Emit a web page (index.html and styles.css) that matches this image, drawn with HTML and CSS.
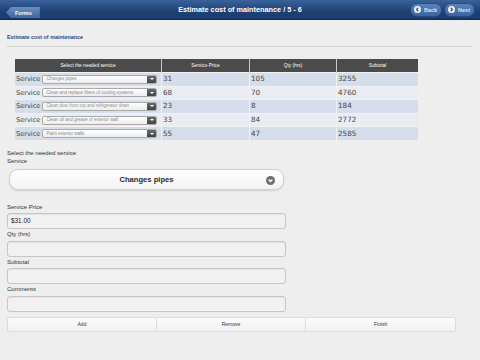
FILE: index.html
```html
<!DOCTYPE html>
<html lang="en">

<head>
  <meta charset="UTF-8" />
  <meta name="viewport" content="width=device-width, initial-scale=1.0" />
  <title>Estimate cost of maintenance</title>
  <link rel="stylesheet" href="styles.css">
</head>

<body>
  <header class="topbar">
    <div class="topbar-left">
      <a class="back-link" href="#">Forms</a>
    </div>
    <h1 class="title">Estimate cost of maintenance / 5 - 6</h1>
    <div class="topbar-right">
      <button class="nav-btn">
        <span class="nav-icon">
          <svg viewBox="0 0 8 8" width="7" height="7"><path d="M4.8 2 L3 4 L4.8 6" fill="none" stroke="#2c4f80" stroke-width="1.4" /></svg>
        </span>
        Back
      </button>
      <button class="nav-btn">
        <span class="nav-icon">
          <svg viewBox="0 0 8 8" width="7" height="7"><path d="M3.2 2 L5 4 L3.2 6" fill="none" stroke="#2c4f80" stroke-width="1.4" /></svg>
        </span>
        Next
      </button>
    </div>
  </header>

  <main class="page">
    <h2 class="section-title">Estimate cost of maintenance</h2>

    <table class="services">
      <thead>
        <tr>
          <th class="col-service">Select the needed service</th>
          <th>Service Price</th>
          <th>Qty (hrs)</th>
          <th>Subtotal</th>
        </tr>
      </thead>
      <tbody id="rows"></tbody>
    </table>

    <form class="entry">
      <div class="entry-head">
        <span>Select the needed service</span>
        <span>Service</span>
      </div>
      <div class="big-select">
        <span>Changes pipes</span>
        <span class="big-select-icon">
          <svg viewBox="0 0 10 10" width="9" height="9"><circle cx="5" cy="5" r="5" fill="#6e6e6e" /><path d="M2.9 4 L5 6.1 L7.1 4" fill="none" stroke="#fff" stroke-width="1.6" /></svg>
        </span>
      </div>

      <div class="field first">
        <label>Service Price</label>
        <div class="input">$31.00</div>
      </div>
      <div class="field">
        <label>Qty (hrs)</label>
        <div class="input"></div>
      </div>
      <div class="field">
        <label>Subtotal</label>
        <div class="input"></div>
      </div>
      <div class="field">
        <label>Comments</label>
        <div class="input"></div>
      </div>

      <div class="actions">
        <button type="button">Add</button>
        <button type="button">Remove</button>
        <button type="button">Finish</button>
      </div>
    </form>
  </main>

  <script>
    const rowsBody = document.querySelector("#rows");

    const services = [
      { name: "Changes pipes", price: 31, qty: 105 },
      { name: "Clean and replace filters of cooling systems", price: 68, qty: 70 },
      { name: "Clean dust from top and refrigerator drain", price: 23, qty: 8 },
      { name: "Clean oil and grease of exterior wall", price: 33, qty: 84 },
      { name: "Paint exterior walls", price: 55, qty: 47 },
    ];

    services.forEach((service) => {
      const tr = document.createElement("tr");
      tr.innerHTML = `
        <td class="col-service">
          <div class="service-cell">
            <span class="row-label">Service</span>
            <span class="mini-select">
              <span class="mini-select-text">${service.name}</span>
              <span class="mini-select-arrow"></span>
            </span>
          </div>
        </td>
        <td>${service.price}</td>
        <td>${service.qty}</td>
        <td>${service.price * service.qty}</td>
      `;
      rowsBody.appendChild(tr);
    });
  </script>
</body>

</html>
```

FILE: styles.css
```css
body {
  margin: 0;
  background-color: #eeeeee;
  font-family: "Liberation Sans", Arial, sans-serif;
  color: #333;
}

/* top bar */
.topbar {
  height: 20px;
  display: grid;
  grid-template-columns: 1fr auto 1fr;
  align-items: center;
  padding: 0 5px;
  background: linear-gradient(#3a639b, #1f4377 55%, #1a3a6a);
  border-bottom: 1px solid #122a4e;
  box-sizing: border-box;
}

.back-link {
  display: inline-flex;
  align-items: center;
  height: 11px;
  padding: 0 8px 0 9px;
  margin-left: 1px;
  font-size: 5.5px;
  font-weight: bold;
  color: #fff;
  text-decoration: none;
  background: linear-gradient(#6b8fbf, #3e66a0);
  clip-path: polygon(5px 0, 100% 0, 100% 100%, 5px 100%, 0 50%);
}

.title {
  margin: 0;
  font-size: 7.3px;
  font-weight: bold;
  color: #fff;
}

.topbar-right {
  display: flex;
  justify-content: flex-end;
  gap: 2px;
}

.nav-btn {
  display: inline-flex;
  align-items: center;
  gap: 3px;
  height: 14px;
  padding: 0 4px 0 3px;
  border: 1px solid #2a4c7d;
  border-radius: 7px;
  background: linear-gradient(#5d83b8, #3b659f);
  font-family: "Liberation Sans", Arial, sans-serif;
  font-size: 5.5px;
  font-weight: bold;
  color: #d9e3f0;
}

.nav-icon {
  display: inline-flex;
  align-items: center;
  justify-content: center;
  width: 7px;
  height: 7px;
  border-radius: 50%;
  background: #f1f4f8;
}

/* page */
.page {
  padding: 0 8px 0 7px;
}

.section-title {
  margin: 13px 0 0;
  padding-bottom: 5px;
  border-bottom: 1px solid #cfcfcf;
  font-size: 5.4px;
  line-height: 8px;
  font-weight: bold;
  color: #2b4a7f;
}

/* table */
.services {
  margin: 12px 0 0 8px;
  width: 403px;
  border-collapse: collapse;
  font-family: "DejaVu Sans", Verdana, sans-serif;
}

.services th {
  height: 13px;
  padding: 0;
  background: #4b4b4b;
  border-right: 1px solid #c9c9c9;
  font-family: "Liberation Sans", Arial, sans-serif;
  font-size: 4.8px;
  font-weight: normal;
  color: #fff;
}

.services th:last-child {
  border-right: none;
}

.services td {
  height: 12.6px;
  padding: 0 0 0 1px;
  border-right: 1px solid #f2f2f2;
  border-top: 1px solid #f2f2f2;
  font-size: 7.2px;
  line-height: 8px;
  color: #444;
}

.services td:last-child {
  border-right: none;
}

.services tbody tr:nth-child(odd) {
  background: #d5dcea;
}

.services tbody tr:nth-child(even) {
  background: #e9ecf3;
}

.col-service {
  width: 145px;
}

.services th:nth-child(2) {
  width: 87px;
}

.services th:nth-child(3) {
  width: 86px;
}

.service-cell {
  display: flex;
  align-items: center;
  gap: 2px;
  font-size: 6.6px;
}

.mini-select {
  display: flex;
  align-items: center;
  width: 115px;
  height: 9px;
  box-sizing: border-box;
  border: 1px solid #a9a9a9;
  border-radius: 2px;
  background: linear-gradient(#fff, #ececec);
  overflow: hidden;
}

.mini-select-text {
  flex: 1;
  padding-left: 3px;
  font-family: "Liberation Sans", Arial, sans-serif;
  font-size: 4.5px;
  color: #8a8a8a;
  white-space: nowrap;
  overflow: hidden;
}

.mini-select-arrow {
  position: relative;
  width: 9px;
  height: 100%;
  background: linear-gradient(#6a6a6a, #444);
}

.mini-select-arrow::after {
  content: "";
  position: absolute;
  left: 2.5px;
  top: 2.5px;
  border-left: 2px solid transparent;
  border-right: 2px solid transparent;
  border-top: 2.5px solid #fff;
}

/* form */
.entry {
  width: 279px;
}

.entry-head {
  display: flex;
  flex-direction: column;
  margin-top: 9px;
  font-size: 6px;
  line-height: 8px;
  color: #333;
}

.big-select {
  display: flex;
  align-items: center;
  justify-content: center;
  position: relative;
  height: 21px;
  margin: 4px 2px 0;
  box-sizing: border-box;
  border: 1px solid #cfcfcf;
  border-radius: 9px;
  background: linear-gradient(#fff, #f3f3f3);
  box-shadow: 0 1px 2px rgba(0, 0, 0, 0.12);
  font-size: 7.6px;
  font-weight: bold;
  color: #2b2b2b;
}

.big-select-icon {
  position: absolute;
  right: 8px;
  top: 6px;
  height: 9px;
}

.field {
  display: flex;
  flex-direction: column;
}

.field.first {
  margin-top: 12px;
}

.field label {
  height: 11.5px;
  line-height: 11.5px;
  font-size: 6px;
  color: #333;
}

.input {
  height: 16px;
  box-sizing: border-box;
  padding: 0 3px;
  border: 1px solid #c6c6c6;
  border-radius: 3px;
  background: #f1f1f1;
  box-shadow: inset 0 1px 1px rgba(0, 0, 0, 0.06);
  font-size: 6.4px;
  line-height: 14px;
  color: #222;
}

.actions {
  display: grid;
  grid-template-columns: repeat(3, 1fr);
  width: 449px;
  margin-top: 5px;
}

.actions button {
  height: 15px;
  padding: 0;
  border: 1px solid #dcdcdc;
  border-left: none;
  background: linear-gradient(#fbfbfb, #f1f1f1);
  font-family: "Liberation Sans", Arial, sans-serif;
  font-size: 5px;
  color: #333;
}

.actions button:first-child {
  border-left: 1px solid #dcdcdc;
  border-radius: 2px 0 0 2px;
}

.actions button:last-child {
  border-radius: 0 2px 2px 0;
}
```
